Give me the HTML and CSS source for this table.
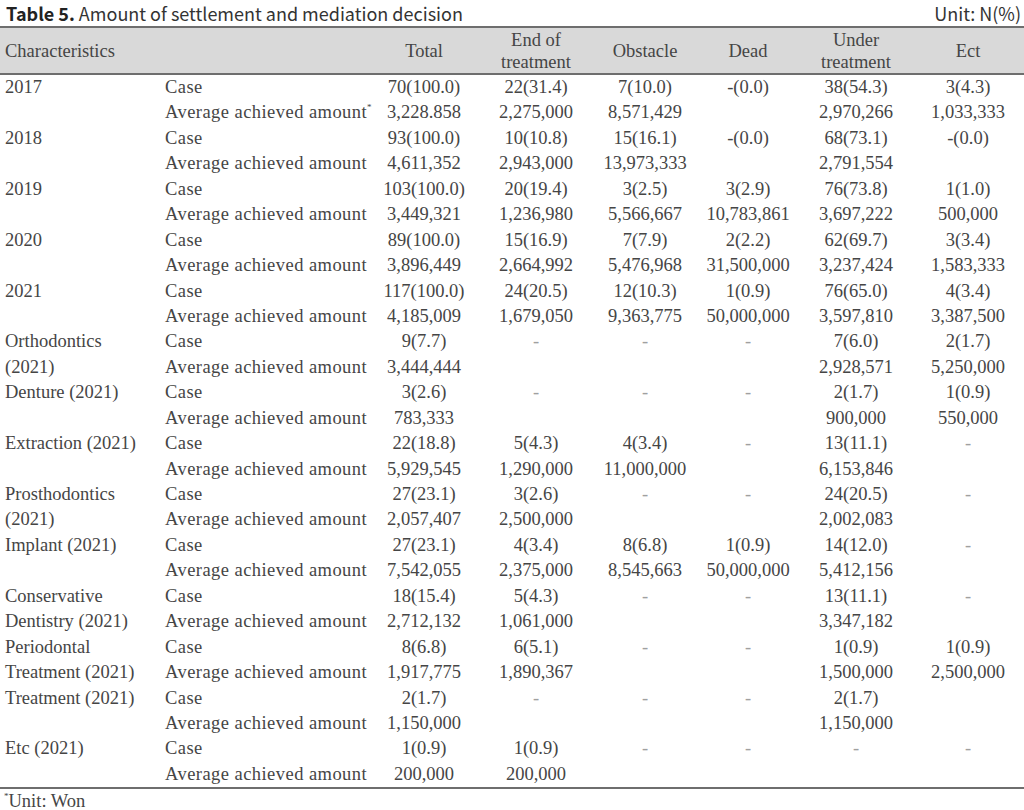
FILE: index.html
```html
<!DOCTYPE html>
<html lang="en">
<head>
<meta charset="utf-8">
<title>Table 5</title>
<link rel="stylesheet" href="styles.css">
</head>
<body>
<div class="page">
  <div class="caption">
    <div class="title"><b>Table 5.</b> Amount of settlement and mediation decision</div>
    <div class="unit">Unit: N(%)</div>
  </div>
  <table class="data">
    <colgroup>
      <col class="c-char"><col class="c-sub"><col class="c-total"><col class="c-end"><col class="c-obs"><col class="c-dead"><col class="c-under"><col class="c-ect">
    </colgroup>
    <thead>
      <tr>
        <th class="left" colspan="2">Characteristics</th>
        <th>Total</th>
        <th>End of<br>treatment</th>
        <th>Obstacle</th>
        <th>Dead</th>
        <th>Under<br>treatment</th>
        <th>Ect</th>
      </tr>
    </thead>
    <tbody>
      <tr><td class="cat" rowspan="2">2017</td><td class="sub">Case</td><td>70(100.0)</td><td>22(31.4)</td><td>7(10.0)</td><td>-(0.0)</td><td>38(54.3)</td><td>3(4.3)</td></tr>
      <tr><td class="sub">Average achieved amount<sup>*</sup></td><td>3,228.858</td><td>2,275,000</td><td>8,571,429</td><td></td><td>2,970,266</td><td>1,033,333</td></tr>

      <tr><td class="cat" rowspan="2">2018</td><td class="sub">Case</td><td>93(100.0)</td><td>10(10.8)</td><td>15(16.1)</td><td>-(0.0)</td><td>68(73.1)</td><td>-(0.0)</td></tr>
      <tr><td class="sub">Average achieved amount</td><td>4,611,352</td><td>2,943,000</td><td>13,973,333</td><td></td><td>2,791,554</td><td></td></tr>

      <tr><td class="cat" rowspan="2">2019</td><td class="sub">Case</td><td>103(100.0)</td><td>20(19.4)</td><td>3(2.5)</td><td>3(2.9)</td><td>76(73.8)</td><td>1(1.0)</td></tr>
      <tr><td class="sub">Average achieved amount</td><td>3,449,321</td><td>1,236,980</td><td>5,566,667</td><td>10,783,861</td><td>3,697,222</td><td>500,000</td></tr>

      <tr><td class="cat" rowspan="2">2020</td><td class="sub">Case</td><td>89(100.0)</td><td>15(16.9)</td><td>7(7.9)</td><td>2(2.2)</td><td>62(69.7)</td><td>3(3.4)</td></tr>
      <tr><td class="sub">Average achieved amount</td><td>3,896,449</td><td>2,664,992</td><td>5,476,968</td><td>31,500,000</td><td>3,237,424</td><td>1,583,333</td></tr>

      <tr><td class="cat" rowspan="2">2021</td><td class="sub">Case</td><td>117(100.0)</td><td>24(20.5)</td><td>12(10.3)</td><td>1(0.9)</td><td>76(65.0)</td><td>4(3.4)</td></tr>
      <tr><td class="sub">Average achieved amount</td><td>4,185,009</td><td>1,679,050</td><td>9,363,775</td><td>50,000,000</td><td>3,597,810</td><td>3,387,500</td></tr>

      <tr><td class="cat" rowspan="2">Orthodontics (2021)</td><td class="sub">Case</td><td>9(7.7)</td><td class="dash">-</td><td class="dash">-</td><td class="dash">-</td><td>7(6.0)</td><td>2(1.7)</td></tr>
      <tr><td class="sub">Average achieved amount</td><td>3,444,444</td><td></td><td></td><td></td><td>2,928,571</td><td>5,250,000</td></tr>

      <tr><td class="cat" rowspan="2">Denture (2021)</td><td class="sub">Case</td><td>3(2.6)</td><td class="dash">-</td><td class="dash">-</td><td class="dash">-</td><td>2(1.7)</td><td>1(0.9)</td></tr>
      <tr><td class="sub">Average achieved amount</td><td>783,333</td><td></td><td></td><td></td><td>900,000</td><td>550,000</td></tr>

      <tr><td class="cat" rowspan="2">Extraction (2021)</td><td class="sub">Case</td><td>22(18.8)</td><td>5(4.3)</td><td>4(3.4)</td><td class="dash">-</td><td>13(11.1)</td><td class="dash">-</td></tr>
      <tr><td class="sub">Average achieved amount</td><td>5,929,545</td><td>1,290,000</td><td>11,000,000</td><td></td><td>6,153,846</td><td></td></tr>

      <tr><td class="cat" rowspan="2">Prosthodontics (2021)</td><td class="sub">Case</td><td>27(23.1)</td><td>3(2.6)</td><td class="dash">-</td><td class="dash">-</td><td>24(20.5)</td><td class="dash">-</td></tr>
      <tr><td class="sub">Average achieved amount</td><td>2,057,407</td><td>2,500,000</td><td></td><td></td><td>2,002,083</td><td></td></tr>

      <tr><td class="cat" rowspan="2">Implant (2021)</td><td class="sub">Case</td><td>27(23.1)</td><td>4(3.4)</td><td>8(6.8)</td><td>1(0.9)</td><td>14(12.0)</td><td class="dash">-</td></tr>
      <tr><td class="sub">Average achieved amount</td><td>7,542,055</td><td>2,375,000</td><td>8,545,663</td><td>50,000,000</td><td>5,412,156</td><td></td></tr>

      <tr><td class="cat" rowspan="2">Conservative Dentistry (2021)</td><td class="sub">Case</td><td>18(15.4)</td><td>5(4.3)</td><td class="dash">-</td><td class="dash">-</td><td>13(11.1)</td><td class="dash">-</td></tr>
      <tr><td class="sub">Average achieved amount</td><td>2,712,132</td><td>1,061,000</td><td></td><td></td><td>3,347,182</td><td></td></tr>

      <tr><td class="cat" rowspan="2">Periodontal Treatment (2021)</td><td class="sub">Case</td><td>8(6.8)</td><td>6(5.1)</td><td class="dash">-</td><td class="dash">-</td><td>1(0.9)</td><td>1(0.9)</td></tr>
      <tr><td class="sub">Average achieved amount</td><td>1,917,775</td><td>1,890,367</td><td></td><td></td><td>1,500,000</td><td>2,500,000</td></tr>

      <tr><td class="cat" rowspan="2">Treatment (2021)</td><td class="sub">Case</td><td>2(1.7)</td><td class="dash">-</td><td class="dash">-</td><td class="dash">-</td><td>2(1.7)</td><td></td></tr>
      <tr><td class="sub">Average achieved amount</td><td>1,150,000</td><td></td><td></td><td></td><td>1,150,000</td><td></td></tr>

      <tr><td class="cat" rowspan="2">Etc (2021)</td><td class="sub">Case</td><td>1(0.9)</td><td>1(0.9)</td><td class="dash">-</td><td class="dash">-</td><td class="dash">-</td><td class="dash">-</td></tr>
      <tr><td class="sub">Average achieved amount</td><td>200,000</td><td>200,000</td><td></td><td></td><td></td><td></td></tr>
    </tbody>
  </table>
  <div class="note"><sup>*</sup>Unit: Won</div>
</div>
</body>
</html>
```

FILE: styles.css
```css
html, body {
  margin: 0;
  padding: 0;
  background: #ffffff;
}

.page {
  width: 1024px;
  height: 810px;
  overflow: hidden;
}

.caption {
  display: flex;
  justify-content: space-between;
  align-items: flex-start;
  box-sizing: border-box;
  height: 26px;
  padding: 1px 3px 0 6px;
  font-family: "Noto Sans CJK KR", "Noto Sans", sans-serif;
  font-size: 18px;
  color: #333333;
  line-height: 24px;
}

.title b {
  font-weight: 700;
  color: #222222;
}

.data {
  width: 1024px;
  border-collapse: collapse;
  table-layout: fixed;
  font-family: "Liberation Serif", "Times New Roman", serif;
  font-size: 18.5px;
  color: #454545;
  border-top: 2px solid #6e6e6e;
  border-bottom: 2px solid #6e6e6e;
}

.c-char { width: 160px; }
.c-sub { width: 210px; }
.c-total { width: 108px; }
.c-end { width: 116px; }
.c-obs { width: 102px; }
.c-dead { width: 104px; }
.c-under { width: 112px; }
.c-ect { width: 112px; }

.data thead tr {
  background: #d9d9d9;
  border-bottom: 2px solid #6e6e6e;
}

.data th {
  height: 45px;
  font-weight: 400;
  line-height: 22px;
  padding: 0;
  text-align: center;
  vertical-align: middle;
}

.data th.left {
  text-align: left;
  padding-left: 5px;
}

.data td {
  height: 25.43px;
  line-height: 25.43px;
  padding: 0;
  text-align: center;
  vertical-align: top;
  white-space: nowrap;
}

.data td.cat {
  text-align: left;
  padding-left: 5px;
  padding-right: 6px;
  white-space: normal;
}

.data td.sub {
  text-align: left;
  padding-left: 5px;
  letter-spacing: 0.45px;
}

.data td.dash {
  color: #a0a0a0;
}

.data sup, .note sup {
  font-size: 9px;
  line-height: 0;
  vertical-align: 8px;
  letter-spacing: 0;
}

.note {
  font-family: "Liberation Serif", "Times New Roman", serif;
  font-size: 18.5px;
  color: #454545;
  padding-left: 4px;
  line-height: 24px;
}
```
